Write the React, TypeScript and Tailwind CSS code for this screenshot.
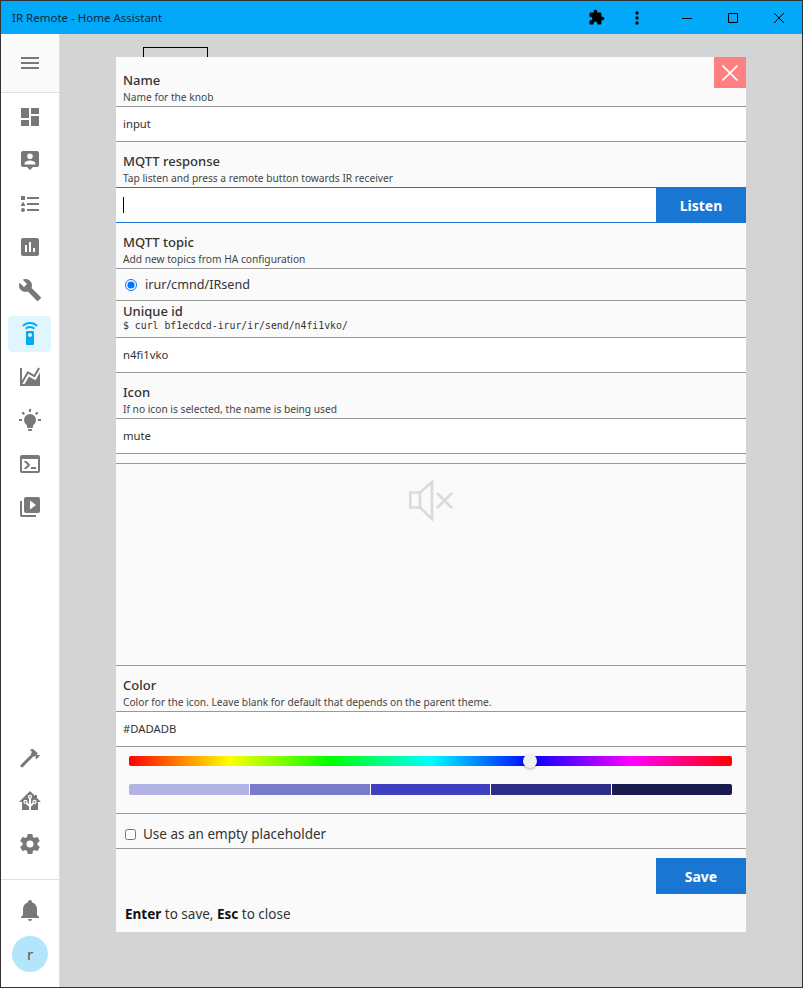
const P = {
  menu: 'M3,6H21V8H3V6M3,11H21V13H3V11M3,16H21V18H3V16Z',
  dashboard: 'M13,3V9H21V3M13,21H21V11H13M3,21H11V15H3M3,13H11V3H3V13Z',
  person: 'M5,3H19A2,2 0 0,1 21,5V17A2,2 0 0,1 19,19H15L12,22L9,19H5A2,2 0 0,1 3,17V5A2,2 0 0,1 5,3M12,5.5A2.8,2.8 0 0,0 9.2,8.3A2.8,2.8 0 0,0 12,11.1A2.8,2.8 0 0,0 14.8,8.3A2.8,2.8 0 0,0 12,5.5M6.5,16.5H17.5V15.5C17.5,13.5 14,12.5 12,12.5C10,12.5 6.5,13.5 6.5,15.5V16.5Z',
  list: 'M5,9.5L7.5,14H2.5L5,9.5M3,4H7V8H3V4M5,20A2,2 0 0,0 7,18A2,2 0 0,0 5,16A2,2 0 0,0 3,18A2,2 0 0,0 5,20M9,5V7H21V5H9M9,19H21V17H9V19M9,13H21V11H9V13Z',
  chart: 'M19 3H5C3.9 3 3 3.9 3 5V19C3 20.1 3.9 21 5 21H19C20.1 21 21 20.1 21 19V5C21 3.9 20.1 3 19 3M9 17H7V10H9V17M13 17H11V7H13V17M17 17H15V13H17V17Z',
  wrench: 'M22.7,19L13.6,9.9C14.5,7.6 14,4.9 12.1,3C10.1,1 7.1,0.6 4.7,1.7L9,6L6,9L1.6,4.7C0.4,7.1 0.9,10.1 2.9,12.1C4.8,14 7.5,14.5 9.8,13.6L18.9,22.7C19.3,23.1 19.9,23.1 20.3,22.7L22.6,20.4C23.1,20 23.1,19.3 22.7,19Z',
  remote: 'M12,0C8.96,0 6.21,1.23 4.22,3.22L5.63,4.63C7.26,3 9.5,2 12,2C14.5,2 16.74,3 18.36,4.64L19.77,3.23C17.79,1.23 15.04,0 12,0M7.05,6.05L8.46,7.46C9.37,6.56 10.62,6 12,6C13.38,6 14.63,6.56 15.54,7.46L16.95,6.05C15.68,4.78 13.93,4 12,4C10.07,4 8.32,4.78 7.05,6.05M12,15A2,2 0 0,1 10,13A2,2 0 0,1 12,11A2,2 0 0,1 14,13A2,2 0 0,1 12,15M15,9H9A1,1 0 0,0 8,10V22A1,1 0 0,0 9,23H15A1,1 0 0,0 16,22V10A1,1 0 0,0 15,9Z',
  area: 'M17.45,15.18L22,7.31V19L22,21H2V3H4V15.54L9.5,6L16,9.78L20.24,2.45L21.97,3.45L16.74,12.5L10.23,8.75L4.31,19H6.57L10.96,11.44L17.45,15.18Z',
  bulb: 'M12,6A6,6 0 0,1 18,12C18,14.22 16.79,16.16 15,17.2V19A1,1 0 0,1 14,20H10A1,1 0 0,1 9,19V17.2C7.21,16.16 6,14.22 6,12A6,6 0 0,1 12,6M14,21V22A1,1 0 0,1 13,23H11A1,1 0 0,1 10,22V21H14M20,11H23V13H20V11M1,11H4V13H1V11M13,1V4H11V1H13M4.92,3.5L7.05,5.64L5.63,7.05L3.5,4.93L4.92,3.5M16.95,5.63L19.07,3.5L20.5,4.93L18.37,7.05L16.95,5.63Z',
  console: 'M20,19V7H4V19H20M20,3A2,2 0 0,1 22,5V19A2,2 0 0,1 20,21H4A2,2 0 0,1 2,19V5C2,3.89 2.9,3 4,3H20M13,17V15H18V17H13M9.58,13L5.57,9H8.4L11.7,12.3C12.09,12.69 12.09,13.33 11.7,13.72L8.42,17H5.59L9.58,13Z',
  media: 'M4,6H2V20A2,2 0 0,0 4,22H18V20H4V6M20,2H8A2,2 0 0,0 6,4V16A2,2 0 0,0 8,18H20A2,2 0 0,0 22,16V4A2,2 0 0,0 20,2M12,14.5V5.5L18,10L12,14.5Z',
  hammer: 'M2 19.63L13.43 8.2L12.72 7.5L14.14 6.07L12 3.89C13.2 2.7 15.09 2.7 16.27 3.89L19.87 7.5L18.45 8.91H21.29L22 9.62L18.45 13.21L17.74 12.5V9.62L16.27 11.04L15.56 10.33L4.13 21.76L2 19.63Z',
  ha: 'M21.8,13H20V21H13V17.67L15.79,14.88L16.5,15C17.66,15 18.6,14.06 18.6,12.9C18.6,11.74 17.66,10.8 16.5,10.8A2.1,2.1 0 0,0 14.4,12.9L14.5,13.61L13,15.13V9.65C13.66,9.29 14.1,8.6 14.1,7.8A2.1,2.1 0 0,0 12,5.7A2.1,2.1 0 0,0 9.9,7.8C9.9,8.6 10.34,9.29 11,9.65V15.13L9.5,13.61L9.6,12.9A2.1,2.1 0 0,0 7.5,10.8A2.1,2.1 0 0,0 5.4,12.9A2.1,2.1 0 0,0 7.5,15L8.21,14.88L11,17.67V21H4V13H2.25C1.83,13 1.42,13 1.42,12.79C1.43,12.57 1.85,12.15 2.28,11.72L11,3C11.33,2.67 11.67,2.33 12,2.33C12.33,2.33 12.67,2.67 13,3L17,7V6H19V9L21.78,11.78C22.18,12.18 22.59,12.59 22.6,12.8C22.6,13 22.2,13 21.8,13M7.5,12A0.9,0.9 0 0,1 8.4,12.9A0.9,0.9 0 0,1 7.5,13.8A0.9,0.9 0 0,1 6.6,12.9A0.9,0.9 0 0,1 7.5,12M16.5,12C17,12 17.4,12.4 17.4,12.9C17.4,13.4 17,13.8 16.5,13.8A0.9,0.9 0 0,1 15.6,12.9A0.9,0.9 0 0,1 16.5,12M12,6.9C12.5,6.9 12.9,7.3 12.9,7.8C12.9,8.3 12.5,8.7 12,8.7C11.5,8.7 11.1,8.3 11.1,7.8C11.1,7.3 11.5,6.9 12,6.9Z',
  cog: 'M12,15.5A3.5,3.5 0 0,1 8.5,12A3.5,3.5 0 0,1 12,8.5A3.5,3.5 0 0,1 15.5,12A3.5,3.5 0 0,1 12,15.5M19.43,12.97C19.47,12.65 19.5,12.33 19.5,12C19.5,11.67 19.47,11.34 19.43,11L21.54,9.37C21.73,9.22 21.78,8.95 21.66,8.73L19.66,5.27C19.54,5.05 19.27,4.96 19.05,5.05L16.56,6.05C16.04,5.66 15.5,5.32 14.87,5.07L14.5,2.42C14.46,2.18 14.25,2 14,2H10C9.75,2 9.54,2.18 9.5,2.42L9.13,5.07C8.5,5.32 7.96,5.66 7.44,6.05L4.95,5.05C4.73,4.96 4.46,5.05 4.34,5.27L2.34,8.73C2.21,8.95 2.27,9.22 2.46,9.37L4.57,11C4.53,11.34 4.5,11.67 4.5,12C4.5,12.33 4.53,12.65 4.57,12.97L2.46,14.63C2.27,14.78 2.21,15.05 2.34,15.27L4.34,18.73C4.46,18.95 4.73,19.03 4.95,18.95L7.44,17.94C7.96,18.34 8.5,18.68 9.13,18.93L9.5,21.58C9.54,21.82 9.75,22 10,22H14C14.25,22 14.46,21.82 14.5,21.58L14.87,18.93C15.5,18.67 16.04,18.34 16.56,17.94L19.05,18.95C19.27,19.03 19.54,18.95 19.66,18.73L21.66,15.27C21.78,15.05 21.73,14.78 21.54,14.63L19.43,12.97Z',
  bell: 'M21,19V20H3V19L5,17V11C5,7.9 7.03,5.17 10,4.29C10,4.19 10,4.1 10,4A2,2 0 0,1 12,2A2,2 0 0,1 14,4C14,4.1 14,4.19 14,4.29C16.97,5.17 19,7.9 19,11V17L21,19M14,21A2,2 0 0,1 12,23A2,2 0 0,1 10,21',
  puzzle: 'M20.5 11H19V7c0-1.1-.9-2-2-2h-4V3.5C13 2.12 11.88 1 10.5 1S8 2.12 8 3.5V5H4c-1.1 0-1.99.9-1.99 2v3.8H3.5c1.49 0 2.7 1.21 2.7 2.7s-1.21 2.7-2.7 2.7H2V20c0 1.1.9 2 2 2h3.8v-1.5c0-1.49 1.21-2.7 2.7-2.7 1.49 0 2.7 1.21 2.7 2.7V22H17c1.1 0 2-.9 2-2v-4h1.5c1.38 0 2.5-1.12 2.5-2.5S21.88 11 20.5 11z',
  dots: 'M12,16A2,2 0 0,1 14,18A2,2 0 0,1 12,20A2,2 0 0,1 10,18A2,2 0 0,1 12,16M12,10A2,2 0 0,1 14,12A2,2 0 0,1 12,14A2,2 0 0,1 10,12A2,2 0 0,1 12,10M12,4A2,2 0 0,1 14,6A2,2 0 0,1 12,8A2,2 0 0,1 10,6A2,2 0 0,1 12,4Z',
};

function Icon({ d, className }: { d: string; className?: string }) {
  return (
    <svg viewBox="0 0 24 24" className={className ?? 'w-6 h-6'} fill="currentColor">
      <path d={d} />
    </svg>
  );
}

function NavItem({ d, active }: { d: string; active?: boolean }) {
  return (
    <div className="h-[43.3px] flex items-center justify-center">
      <div className={`w-[43px] h-9 rounded flex items-center justify-center ${active ? 'ml-[-1px] bg-[#e1f5fe] text-[#03a9f4]' : 'text-[#787878]'}`}>
        <Icon d={d} />
      </div>
    </div>
  );
}

function Head({ title, sub, first }: { title: string; sub: string; first?: boolean }) {
  return (
    <div className={`px-[7px] border-b border-[#999] ${first ? 'h-[50px] pt-[15px]' : 'h-[46px] pt-[11px]'}`}>
      <div className="text-[13px] leading-4 font-medium text-[#333]">{title}</div>
      <div className="mt-[2px] text-[10.2px] leading-[14px] text-[#444]">{sub}</div>
    </div>
  );
}

function Field({ value }: { value: string }) {
  return (
    <div className="h-[35px] bg-white border-b border-[#999] px-[7px] flex items-center text-[11.3px] text-[#333]">
      {value}
    </div>
  );
}

const SWATCHES = ['bg-[#b3b3e6]', 'bg-[#7a7acc]', 'bg-[#4040bf]', 'bg-[#2d2d86]', 'bg-[#191a4d]'];

export default function App() {
  return (
    <div className="w-[803px] h-[988px] flex flex-col border border-[#333] bg-[#d4d4d4] overflow-hidden font-['Noto_Sans',sans-serif]">
      {/* title bar */}
      <div className="h-[33px] shrink-0 bg-[#03a9f9] flex items-center pl-[11px] text-[11.5px] text-[#0b2a3a]">
        <span>IR Remote - Home Assistant</span>
        <div className="ml-auto flex items-center text-black">
          <Icon d={P.puzzle} className="w-[17px] h-[17px] mr-[22px]" />
          <Icon d={P.dots} className="w-5 h-5 mr-[34px]" />
          <svg viewBox="0 0 12 12" className="w-3 h-3 mr-[34px]" stroke="currentColor" fill="none"><path d="M1 6.5H11" /></svg>
          <svg viewBox="0 0 12 12" className="w-3 h-3 mr-[34px]" stroke="currentColor" fill="none"><path d="M1.5 1.5H10.5V10.5H1.5Z" /></svg>
          <svg viewBox="0 0 12 12" className="w-3 h-3 mr-[17px]" stroke="currentColor" fill="none"><path d="M1 1L11 11M11 1L1 11" /></svg>
        </div>
      </div>

      <div className="flex-1 flex min-h-0">
        {/* sidebar */}
        <div className="w-[59px] shrink-0 bg-white border-r border-[#e0e0e0] flex flex-col">
          <div className="h-[59px] shrink-0 bg-[#fafafa] border-b border-[#e0e0e0] flex items-center justify-center text-[#787878]">
            <Icon d={P.menu} />
          </div>
          <div className="pt-[2.5px]">
            <NavItem d={P.dashboard} />
            <NavItem d={P.person} />
            <NavItem d={P.list} />
            <NavItem d={P.chart} />
            <NavItem d={P.wrench} />
            <NavItem d={P.remote} active />
            <NavItem d={P.area} />
            <NavItem d={P.bulb} />
            <NavItem d={P.console} />
            <NavItem d={P.media} />
          </div>
          <div className="mt-auto pb-[13px]">
            <NavItem d={P.hammer} />
            <NavItem d={P.ha} />
            <NavItem d={P.cog} />
          </div>
          <div className="h-[108px] shrink-0 border-t border-[#e0e0e0] flex flex-col items-center text-[#787878]">
            <div className="h-[56px] pt-[4px] flex items-center"><Icon d={P.bell} /></div>
            <div className="w-9 h-9 rounded-full bg-[#b3e5fc] flex items-center justify-center text-[15px] text-[#555]">r</div>
          </div>
        </div>

        {/* main */}
        <div className="relative flex-1 bg-[#d4d4d4]">
          <div className="ml-[83px] mt-[13px] w-[65px] h-[30px] border border-black" />

          <div className="absolute left-[56px] top-[23px] w-[630px] h-[875px] bg-[#fafafa] text-[#333]">
            <button className="absolute right-0 top-0 w-[32px] h-[31px] bg-[#ff8080] flex items-center justify-center text-white">
              <svg viewBox="0 0 16 16" className="w-4 h-4" stroke="currentColor" strokeWidth="1.6" fill="none"><path d="M0.5 0.5L15.5 15.5M15.5 0.5L0.5 15.5" /></svg>
            </button>

            <Head first title="Name" sub="Name for the knob" />
            <Field value="input" />

            <div className="px-[7px] h-[46px] pt-[11px] border-b border-[#1976d2]">
              <div className="text-[13px] leading-4 font-medium">MQTT response</div>
              <div className="mt-[2px] text-[10.2px] leading-[14px] text-[#444]">Tap listen and press a remote button towards IR receiver</div>
            </div>
            <div className="h-[35px] bg-white border-b border-[#1976d2] flex">
              <div className="flex-1 pl-[7px] flex items-center">
                <div className="w-px h-4 bg-black" />
              </div>
              <div className="w-[90px] pt-[1px] bg-[#1976d2] text-white text-[14px] font-bold flex items-center justify-center">Listen</div>
            </div>

            <Head title="MQTT topic" sub="Add new topics from HA configuration" />
            <div className="h-[32px] pt-[1px] border-b border-[#999] flex items-center pl-[9px] text-[12.6px]">
              <input type="radio" checked readOnly className="w-3 h-3 accent-[#0075ff] mr-2" />
              <span>irur/cmnd/IRsend</span>
            </div>

            <div className="h-[37px] px-[7px] border-b border-[#999] pt-[2px]">
              <div className="text-[13px] leading-4 font-medium">Unique id</div>
              <div className="text-[9.83px] leading-[14px] font-['DejaVu_Sans_Mono',monospace]">$ curl bf1ecdcd-irur/ir/send/n4fi1vko/</div>
            </div>
            <Field value="n4fi1vko" />

            <Head title="Icon" sub="If no icon is selected, the name is being used" />
            <Field value="mute" />
            <div className="h-[10px] border-b border-[#999]" />

            <div className="h-[202px] border-b border-[#999] flex justify-center pt-[16px]">
              <svg viewBox="0 0 44 42" className="w-[44px] h-[42px]" fill="none" stroke="#dadadb" strokeWidth="2.6">
                <path d="M1.3 12.5H11V27.5H1.3Z" />
                <path d="M11 12.5L23 2V39L11 27.5" />
                <path d="M28 13L43 28M43 13L28 28" />
              </svg>
            </div>

            <Head title="Color" sub="Color for the icon. Leave blank for default that depends on the parent theme." />
            <Field value="#DADADB" />

            <div className="h-[67px] border-b border-[#999] pl-[13px] pr-[14px] pt-[9px]">
              <div className="relative h-[10px] rounded-[2px] bg-[linear-gradient(to_right,#f00,#ff0,#0f0,#0ff,#00f,#f0f,#f00)]">
                <div className="absolute left-[394px] top-[-2px] w-[14px] h-[14px] rounded-full bg-[#f1f1f1] shadow-[0_1px_3px_rgba(0,0,0,0.3)]" />
              </div>
              <div className="flex gap-px mt-[18px] h-[11px] rounded-[2px] overflow-hidden">
                {SWATCHES.map(c => (
                  <div key={c} className={`flex-1 ${c}`} />
                ))}
              </div>
            </div>

            <div className="h-[35px] border-b border-[#999] flex items-center pt-[6px] pl-[9px] text-[13.5px]">
              <input type="checkbox" readOnly className="w-[11px] h-[11px] mr-[7px]" />
              <span>Use as an empty placeholder</span>
            </div>

            <div className="flex justify-end mt-[9px]">
              <div className="w-[90px] h-[36px] pt-[1px] bg-[#1976d2] text-white text-[14px] font-bold flex items-center justify-center">Save</div>
            </div>
            <div className="mt-[10px] pl-[9px] text-[13.5px] leading-5">
              <b className="text-[#111]">Enter</b> to save, <b className="text-[#111]">Esc</b> to close
            </div>
          </div>
        </div>
      </div>
    </div>
  );
}
